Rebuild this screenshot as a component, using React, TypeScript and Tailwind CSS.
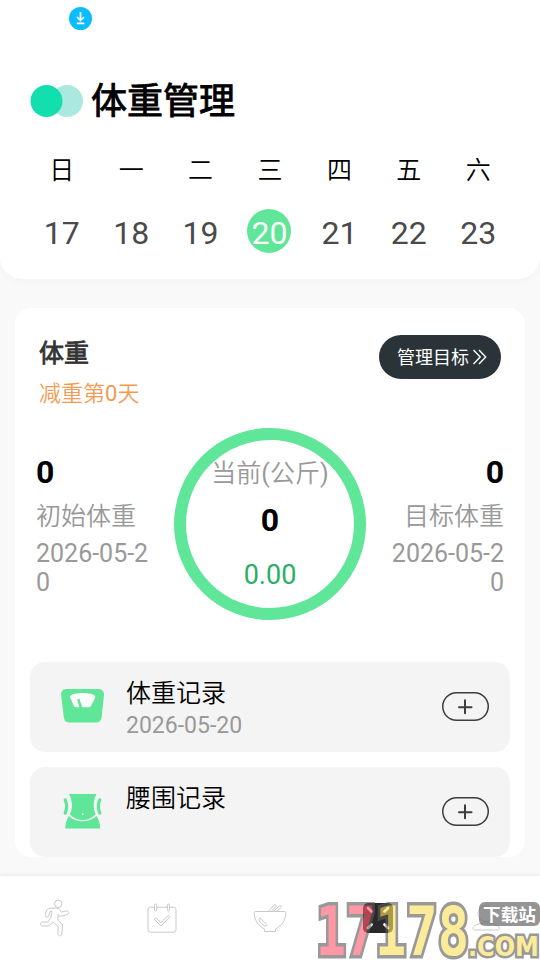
import React from "react";

const DAYS = [
  { label: "日", date: "17" },
  { label: "一", date: "18" },
  { label: "二", date: "19" },
  { label: "三", date: "20", active: true },
  { label: "四", date: "21" },
  { label: "五", date: "22" },
  { label: "六", date: "23" },
];

function StatusBar() {
  return (
    <div className="flex h-[37px] items-center pl-[69px]">
      <svg width="23" height="23" viewBox="0 0 23 23" fill="none">
        <circle cx="11.5" cy="11.5" r="11.5" fill="#0bbcff" />
        <path d="M11.5 5v8.2M8 10l3.5 3.5L15 10M7.7 16.3h7.6" stroke="#fff" strokeWidth="1.7" />
      </svg>
    </div>
  );
}

function Header() {
  return (
    <header className="h-[279px] shrink-0 rounded-b-[22px] bg-white shadow-[0_3px_10px_rgba(0,0,0,0.025)]">
      <StatusBar />
      <div className="mt-[40px] flex h-[48px] items-center gap-2 pl-[30px]">
        <svg width="53" height="32" viewBox="0 0 53 32">
          <circle cx="37" cy="16" r="16" fill="#abe9e0" />
          <circle cx="16.5" cy="16" r="16" fill="#12dfad" />
        </svg>
        <h1 className="pt-[2px] text-[36px] leading-[48px] text-black [-webkit-text-stroke:0.9px_black]">体重管理</h1>
      </div>
      <div className="mt-[26px] grid grid-cols-7 px-[27px] text-center">
        {DAYS.map((d) => (
          <div key={d.date} className="flex flex-col items-center">
            <span className="text-[25px] leading-[40px] font-[350] text-black">{d.label}</span>
            <span
              className={
                d.active
                  ? "mt-[18px] mr-[2px] flex size-[44px] items-center justify-center rounded-full bg-[#5fe698] pt-[3px] pl-px text-[32px] leading-[44px] text-white"
                  : "mt-[20px] text-[32px] leading-[44px] text-[#4a4a4a]"
              }
            >
              {d.date}
            </span>
          </div>
        ))}
      </div>
    </header>
  );
}

function Stat({ label, right }: { label: string; right?: boolean }) {
  return (
    <div className={right ? "mt-[25px] w-[113px] text-right" : "mt-[25px] w-[113px]"}>
      <div className="text-[32px] leading-[38px] font-bold text-black">0</div>
      <div className="mt-[8px] text-[25px] leading-[36px] font-[350] text-[#999]">{label}</div>
      <div className="mt-1 text-[25px] leading-[29px] break-all text-[#999]">2026-05-20</div>
    </div>
  );
}

function ScaleIcon() {
  return (
    <svg className="mb-[2px] ml-px" width="44" height="36" viewBox="0 0 44 36">
      <path d="M6 .5h32c4 0 6.300 2.500 6 6l-2.400 23c-.4 3.600-2.600 5.500-6 5.500H8.800c-3.400 0-5.500-2-5.900-5.500L.1 6.500C-.2 3 2 .5 6 .5z" fill="#5fe698" />
      <path d="M9.800 7.500c2-1.900 6-2.800 12.500-2.800s10.500.9 12.300 2.800c.7.8.6 1.600.1 2.600l-3.900 7.600c-.5 1-1.400 1.400-2.500 1.500l-6.500.1-3-8.600-2.300.5 2.200 8.200-3.300-.1c-1-.1-1.800-.6-2.300-1.500L9.700 10c-.5-1-.6-1.800.1-2.500z" fill="#fff" />
    </svg>
  );
}

function WaistIcon() {
  return (
    <svg width="39" height="36" viewBox="0 0 39 36">
      <path d="M6 0h27.500c-3.600 6.500-3.700 14-.8 20.200C28 24.800 24 26 19.700 26S11 24.700 6.800 20.300C9.900 14.500 9.700 7 6 0z" fill="#5fe698" />
      <path d="M5.800 22c4.500 4 9 5.300 13.900 5.300s9.500-1.400 13.800-5.300c2.400 3.700 3.500 7.500 3.700 12.500H2.200c.2-5 1.400-9 3.600-12.500z" fill="#5fe698" />
      <path d="M2.200 6c2 4.300 1.900 8.700 0 13M36.800 6c-2 4.300-1.900 8.700 0 13" fill="none" stroke="#5fe698" strokeWidth="3.200" strokeLinecap="round" />
      <circle cx="19.700" cy="20.200" r="0.900" fill="#f4f4f4" />
    </svg>
  );
}

function Record({ icon, title, date }: { icon: React.ReactNode; title: string; date?: string }) {
  return (
    <div className="flex h-[90px] rounded-[15px] bg-[#f4f4f4] pl-[30px] pr-[21px]">
      <div className="flex w-[66px] items-center justify-center pr-[22px]">{icon}</div>
      <div className="flex-1 pt-[14px]">
        <div className="text-[25px] leading-[36px] font-[350] text-black">{title}</div>
        {date && <div className="text-[23px] leading-[28px] text-[#999]">{date}</div>}
      </div>
      <svg className="mt-[30px]" width="47" height="29" viewBox="0 0 47 29" fill="none" stroke="#3c3c3c">
        <rect x="0.750" y="0.750" width="45.500" height="27.500" rx="13.750" strokeWidth="1.500" />
        <path d="M23 8.200v13M17 15.200h12.500" strokeWidth="2" strokeLinecap="round" />
      </svg>
    </div>
  );
}

function WeightCard() {
  return (
    <main className="mx-[15px] mt-[29px] h-[549px] shrink-0 overflow-hidden rounded-[16px] bg-white">
      <div className="flex justify-between px-6 pt-[27px]">
        <div>
          <h2 className="text-[25px] leading-[38px] text-[#333] [-webkit-text-stroke:0.8px_#333]">体重</h2>
          <p className="mt-1 text-[22px] leading-[34px] font-[350] text-[#f29b52]">
            减重第<span className="font-normal">0</span>天
          </p>
        </div>
        <button className="flex h-[44px] w-[122px] items-center gap-1 rounded-full bg-[#293338] pl-[18px] text-[18px] leading-[44px] text-white">
          <span className="pt-[2px]">管理目标</span>
          <svg width="14" height="16" viewBox="0.500 0 14 16" fill="none" stroke="#fff" strokeWidth="1.400">
            <path d="M1 1l6.700 7L1 15M6.500 1l6.700 7-6.700 7" />
          </svg>
        </button>
      </div>
      <div className="mt-[17px] flex justify-between px-[21px]">
        <Stat label="初始体重" />
        <div className="flex size-[192px] flex-col items-center rounded-full border-[12px] border-[#5fe698] pt-[16px]">
          <span className="text-[25px] leading-[36px] font-[350] whitespace-nowrap text-[#999]">
            当前<span className="font-normal">(</span>公斤<span className="font-normal">)</span>
          </span>
          <span className="mt-[9px] text-[32px] leading-[38px] font-bold text-black">0</span>
          <span className="mt-[20px] text-[27px] leading-[32px] text-[#2bae66]">0.00</span>
        </div>
        <Stat label="目标体重" right />
      </div>
      <div className="mt-[42px] flex flex-col gap-[15px] px-[15px]">
        <Record icon={<ScaleIcon />} title="体重记录" date="2026-05-20" />
        <Record icon={<WaistIcon />} title="腰围记录" />
      </div>
    </main>
  );
}

function RunnerIcon() {
  return (
    <svg className="ml-px" width="32" height="38" viewBox="0 0 32 38">
      <circle cx="19.200" cy="4.800" r="3.700" />
      <path d="M13 9.200h5c2 .2 3.200 1.500 4.200 4l5-1.200c3-.5 3.600 3 .9 3.700l-6.400 1.500c-1.500.2-1.900-.7-2.500-1.900l-.4 6 4 3.300c.7.800.8 1.500.7 2.500l-.7 7.900c-.4 2.600-4 2.200-4-.3l.3-7.200-5.300-4.700-2.600 3.200c-.6.800-1.400 1-2.400 1H3.500c-2.700-.3-2.700-3.700 0-4h5.200l3.300-4.700 1-6.300-2 .6-1.300 4.100c-.8 2.300-3.900 1.400-3.400-.9l1.400-4.600c.7-1.500 3.300-2 5.300-2z" />
    </svg>
  );
}

function CalendarIcon() {
  return (
    <svg width="32" height="38" viewBox="0 0 32 38">
      <rect x="2" y="8.200" width="28" height="25" rx="2.500" />
      <g fill="#fff">
        <rect x="8.500" y="5" width="2.200" height="7" rx="1.100" />
        <rect x="21.400" y="5" width="2.200" height="7" rx="1.100" />
        <path d="M10.300 19.300l4.500 4.400 7-6.800c1-.9 2.500.5 1.600 1.500L14.900 27l-6-6.100c-.8-1.100.4-2.400 1.400-1.600z" />
      </g>
    </svg>
  );
}

function BowlIcon() {
  return (
    <svg width="34" height="38" viewBox="0 0 34 38">
      <path d="M15 12.500l6.200-6.400c1.100-1 2.600.3 1.600 1.400L18 12.500l2.300-.2 6.300-5.500c1.200-.9 2.400.5 1.500 1.600l-4.200 4.100" />
      <path d="M2.400 12.500h29.200c1 0 1.300.5 1.200 1.500-.5 7.500-3.800 12.500-10.300 16v2.500h-11V30C5 26.500 1.700 21.500 1.200 14c-.1-1 .2-1.500 1.200-1.500z" />
      <path d="M8 19.500c-1.500-.8-2.200.2-1.800 1.300 1 3 3 5 5.700 6.200 1.800.4 2.500-1 1.300-2.100-2-1.500-3.500-3-5.200-5.400z" />
    </svg>
  );
}

function FocusIcon() {
  return (
    <svg width="30" height="38" viewBox="0 0 30 38" stroke="none">
      <rect x="0" y="4" width="30" height="30" rx="5" fill="#292929" />
      <path d="M5 9l3.500 3.500M25 9l-3.500 3.500M5 29l3.500-3.500M25 29l-3.500-3.500" stroke="#fff" strokeWidth="2.800" strokeLinecap="round" />
    </svg>
  );
}

function ProfileIcon() {
  return (
    <svg width="34" height="38" viewBox="0 0 34 38">
      <circle cx="17" cy="14.500" r="8" />
      <path d="M6 31h22c2.500 0 3-2 1.500-3.500C25 22.800 9 22.800 5 27.500 3.500 29 3.500 31 6 31z" />
    </svg>
  );
}

function Watermark() {
  return (
    <svg className="pointer-events-none absolute right-0 bottom-0" width="224" height="60" viewBox="0 0 224 60">
      <g
        fontFamily="'DejaVu Sans Mono', monospace"
        fontWeight="700"
        strokeLinejoin="miter"
        opacity="0.620"
        className="[paint-order:stroke] stroke-[#5c5c5c]"
      >
        <text x="0" y="55" fontSize="68" strokeWidth="7" fill="#ff5a6e" textLength="60" lengthAdjust="spacingAndGlyphs">17</text>
        <text x="59" y="55" fontSize="68" strokeWidth="7" fill="#fbdf5b" textLength="94" lengthAdjust="spacingAndGlyphs">178</text>
        <text x="152" y="56" fontSize="26" strokeWidth="5" fill="#fbdf5b" fontFamily="'DejaVu Sans', sans-serif" textLength="71" lengthAdjust="spacingAndGlyphs">.COM</text>
      </g>
      <rect x="163" y="2" width="61" height="24" rx="6" fill="#666" opacity="0.700" />
      <text x="167" y="20.500" fontSize="17" fontWeight="700" fill="#fff" fontFamily="'Noto Sans CJK SC', sans-serif" textLength="53" lengthAdjust="spacingAndGlyphs">下载站</text>
    </svg>
  );
}

export default function App() {
  return (
    <div className="relative flex h-[960px] w-[540px] flex-col overflow-hidden bg-[#f9f9f9] font-['Roboto','Noto_Sans_CJK_SC',sans-serif]">
      <Header />
      <WeightCard />
      <nav className="mt-[19px] grid h-[84px] shrink-0 grid-cols-5 place-items-center bg-white fill-none stroke-[#c9c9c9] stroke-1 shadow-[0_-1px_4px_rgba(0,0,0,0.07)]">
        <RunnerIcon />
        <CalendarIcon />
        <BowlIcon />
        <FocusIcon />
        <ProfileIcon />
      </nav>
      <Watermark />
    </div>
  );
}
